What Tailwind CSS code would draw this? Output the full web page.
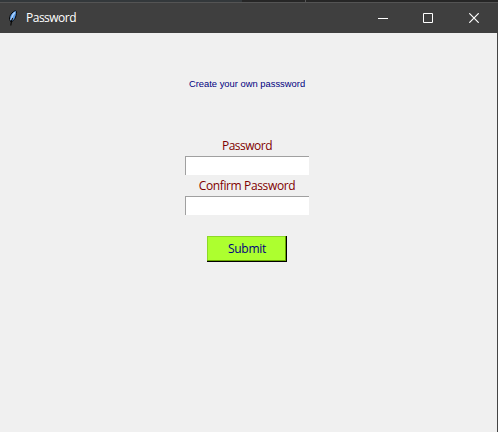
<!DOCTYPE html>
<html lang="en">
<head>
<meta charset="utf-8">
<title>Password</title>
<script src="https://cdn.jsdelivr.net/npm/@tailwindcss/browser@4"></script>
</head>
<body class="w-[498px] h-[432px] overflow-hidden flex flex-col bg-[#f0f0f0] font-['Open_Sans','Noto_Sans',sans-serif] text-xs">
  <div class="h-[2px] shrink-0 flex bg-[#262626]">
    <div class="w-[242px] bg-[#33383b]"></div>
    <div class="w-[63px]"></div>
    <div class="w-px bg-[#585858]"></div>
  </div>
  <header class="h-[31px] shrink-0 flex items-center bg-[#3f3f3f] border-t border-[#545454] text-white">
    <svg class="ml-[8px] mb-px w-[10px] h-[16px] shrink-0" viewBox="0 0 10 16">
      <path d="M7.5 .6C4 2 1.3 5.5 1.5 9.5L3 12C6 11 8.7 7 8.4 1.5Z" fill="#5b9be6" stroke="#050505" stroke-width="1"/>
      <path d="M6.9 2.3C4.7 4.5 3.6 7 3 10.2" fill="none" stroke="#b4d6fa" stroke-width="1.4"/>
      <path d="M4.6 8C3.8 9.5 3 12 2.8 15.5" fill="none" stroke="#050505" stroke-width="1.1"/>
    </svg>
    <span class="ml-[8px] leading-4 tracking-[-0.5px]">Password</span>
    <div class="ml-auto flex h-full">
      <div class="w-[46px] flex items-center justify-center"><svg class="w-[10px] h-[10px]" viewBox="0 0 10 10"><path d="M0 5.5H10" stroke="#fff"/></svg></div>
      <div class="w-[44px] flex items-center justify-center"><svg class="w-[10px] h-[10px]" viewBox="0 0 10 10"><path d="M.5 .5H9.5V9.5H.5Z" fill="none" stroke="#fff"/></svg></div>
      <div class="w-[48px] flex items-center justify-center"><svg class="w-[10px] h-[10px]" viewBox="0 0 10 10"><path d="M.3 .3L9.7 9.7M9.7 .3L.3 9.7" stroke="#fff" stroke-width="1.2"/></svg></div>
    </div>
  </header>
  <main class="flex-1 flex flex-col items-center border-r border-[#444] pr-[3px] text-[#800000]">
    <h1 class="mt-[45px] h-3 leading-3 text-[9.4px] text-[#000080] font-['Liberation_Sans',sans-serif] whitespace-nowrap">Create your own passsword</h1>
    <label class="mt-[48px] h-[18px] leading-4 tracking-[-0.5px]">Password</label>
    <input class="block w-[124px] h-[19px] bg-white border-t border-l border-[#a0a0a0] outline-none">
    <label class="mt-[3px] h-[18px] leading-4 tracking-[-0.37px]">Confirm Password</label>
    <input class="block w-[124px] h-[19px] bg-white border-t border-l border-[#a0a0a0] outline-none">
    <button class="mt-[21px] w-[80px] h-[26px] bg-[#adff2f] border-r border-b border-black shadow-[inset_-1px_-1px_0_#69a800,inset_1px_1px_0_#8dd927] text-[#000080] leading-4 pl-px tracking-[-0.25px]">Submit</button>
  </main>
</body>
</html>
